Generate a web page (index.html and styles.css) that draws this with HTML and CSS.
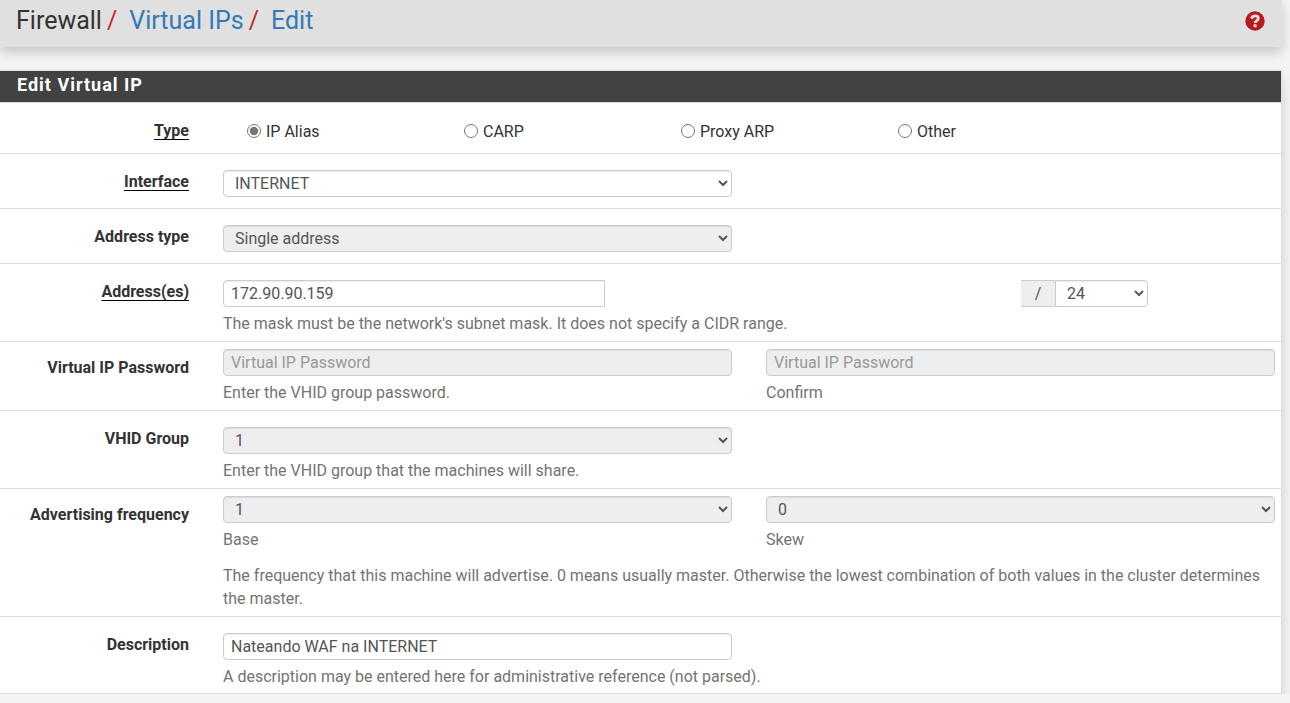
FILE: index.html
```html
<!DOCTYPE html>
<html lang="en">
<head>
<meta charset="utf-8">
<title>Firewall: Virtual IPs: Edit</title>
<link rel="stylesheet" href="styles.css">
</head>
<body>
<header class="header">
  <nav class="breadcrumb" aria-label="Breadcrumb">
    <span>Firewall</span><span class="sep">/</span><a href="#">Virtual IPs</a><span class="sep">/</span><a href="#">Edit</a>
  </nav>
  <a class="help" href="#" aria-label="Help">
    <svg width="20" height="20" viewBox="0 0 20 20" aria-hidden="true">
      <circle cx="10" cy="10" r="9.7" fill="#b71c1c"/>
      <path d="M6.4 7.4C7.1 5.6 8.4 4.8 10.1 4.8C12.1 4.8 13.3 5.9 13.3 7.5C13.3 9.6 10.1 9.6 10.1 12" fill="none" stroke="#e0e0e0" stroke-width="2.8"/>
      <rect x="8.6" y="13.2" width="3" height="3" rx=".4" fill="#e0e0e0"/>
    </svg>
  </a>
</header>
<main>
<form class="panel">
  <h2 class="panel-title">Edit Virtual IP</h2>

  <div class="row" role="radiogroup" aria-labelledby="type-label">
    <span class="label" id="type-label"><span class="required">Type</span></span>
    <div class="radios">
      <label><input type="radio" name="type" checked>IP Alias</label>
      <label><input type="radio" name="type">CARP</label>
      <label><input type="radio" name="type">Proxy ARP</label>
      <label><input type="radio" name="type">Other</label>
    </div>
  </div>

  <div class="row">
    <label class="label" for="interface"><span class="required">Interface</span></label>
    <div class="field"><select class="control" id="interface"><option>INTERNET</option></select></div>
  </div>

  <div class="row">
    <label class="label" for="address-type">Address type</label>
    <div class="field"><select class="control" id="address-type" disabled><option>Single address</option></select></div>
  </div>

  <div class="row">
    <label class="label" for="address"><span class="required">Address(es)</span></label>
    <div class="field wide">
      <div class="address">
        <input class="control address-input" id="address" type="text" value="172.90.90.159">
        <div class="mask">
          <span class="addon">/</span>
          <select class="control mask-select" aria-label="Subnet mask"><option>24</option></select>
        </div>
      </div>
      <p class="hint">The mask must be the network's subnet mask. It does not specify a CIDR range.</p>
    </div>
  </div>

  <div class="row compact">
    <label class="label" for="password">Virtual IP Password</label>
    <div class="field">
      <input class="control" id="password" type="password" placeholder="Virtual IP Password" disabled>
      <p class="hint">Enter the VHID group password.</p>
    </div>
    <div class="field">
      <input class="control" id="confirm" type="password" placeholder="Virtual IP Password" disabled>
      <p class="hint"><label for="confirm">Confirm</label></p>
    </div>
  </div>

  <div class="row">
    <label class="label" for="vhid">VHID Group</label>
    <div class="field">
      <select class="control" id="vhid" disabled><option>1</option></select>
      <p class="hint">Enter the VHID group that the machines will share.</p>
    </div>
  </div>

  <div class="row compact">
    <span class="label">Advertising frequency</span>
    <div class="field">
      <select class="control" id="base" disabled><option>1</option></select>
      <p class="hint"><label for="base">Base</label></p>
    </div>
    <div class="field">
      <select class="control" id="skew" disabled><option>0</option></select>
      <p class="hint"><label for="skew">Skew</label></p>
    </div>
    <p class="hint note">The frequency that this machine will advertise. 0 means usually master. Otherwise the lowest combination of both values in the cluster determines the master.</p>
  </div>

  <div class="row">
    <label class="label" for="description">Description</label>
    <div class="field">
      <input class="control" id="description" type="text" value="Nateando WAF na INTERNET">
      <p class="hint one-line">A description may be entered here for administrative reference (not parsed).</p>
    </div>
  </div>
</form>
</main>
</body>
</html>
```
FILE: styles.css
```css
* { box-sizing: border-box; }

body {
  margin: 0;
  padding-right: 8px;
  background: #f4f4f4;
  color: #333;
  font: 16px/23px Roboto, "Liberation Sans", sans-serif;
}

a { color: #337ab7; text-decoration: none; }

.header {
  display: flex;
  justify-content: space-between;
  align-items: flex-start;
  padding: 6px 17px 11px 16px;
  background: #e0e0e0;
  box-shadow: 0 5px 12px rgba(0, 0, 0, .2);
}

.breadcrumb {
  font-size: 25px;
  line-height: 30px;
}

.sep { margin: 0 12px 0 5px; color: #c62828; }

.help { display: block; padding-top: 5px; }
.help svg { display: block; }

.panel {
  margin-top: 23px;
  background: #fff;
  border: 1px solid #ddd;
  border-left: 0;
  box-shadow: 0 6px 12px rgba(0, 0, 0, .15);
}

.panel-title {
  margin: 0;
  padding: 2px 17px 5px;
  background: #424242;
  color: #fff;
  font-size: 18px;
  font-weight: 700;
  line-height: 24px;
  letter-spacing: 1px;
}

.row {
  display: grid;
  grid-template-columns: 189px minmax(0, 1fr) minmax(0, 1fr);
  column-gap: 34px;
  padding: 16px 6px 6px 0;
  border-top: 1px solid #ddd;
}

.row:last-child { padding-bottom: 5px; }

.label {
  text-align: right;
  font-weight: 700;
}

.required {
  text-decoration: underline 1px #000;
  text-decoration-skip-ink: none;
  text-underline-offset: 3px;
}

.compact { padding-top: 7px; }
.compact .label { padding-top: 7px; }

.wide { grid-column: 2 / -1; }

.field { min-height: 32px; }

.radios {
  grid-column: 2 / -1;
  display: grid;
  grid-template-columns: repeat(4, 217px);
  padding: 1px 0 4px 24px;
}

.radios label { display: flex; align-items: flex-start; gap: 5px; }
.radios input { margin: 4px 0 0; width: 14px; height: 14px; accent-color: #767676; }

.control {
  display: block;
  width: 100%;
  height: 27px;
  padding: 0 7px;
  border: 1px solid #ccc;
  border-radius: 4px;
  background: #fff;
  box-shadow: inset 0 1px 1px rgba(0, 0, 0, .08);
  color: #555;
  font: inherit;
}

.control:disabled { background: #eee; color: #555; opacity: 1; }
.control::placeholder { color: #999; }

.address { display: flex; justify-content: space-between; }
.address-input { width: 382px; border-radius: 4px 0 0 4px; }

.mask { display: flex; width: 127px; margin-right: 127px; }

.addon {
  width: 34px;
  border: 1px solid #ccc;
  border-width: 1px 0;
  background: #eee;
  color: #555;
  line-height: 25px;
  text-align: center;
}

.mask-select { flex: 1; border-radius: 0 4px 4px 0; }

.hint { margin: 5px 0 0; color: #737373; }
.hint.note { grid-column: 2 / -1; margin-top: 13px; }
.hint.one-line { white-space: nowrap; }
```
